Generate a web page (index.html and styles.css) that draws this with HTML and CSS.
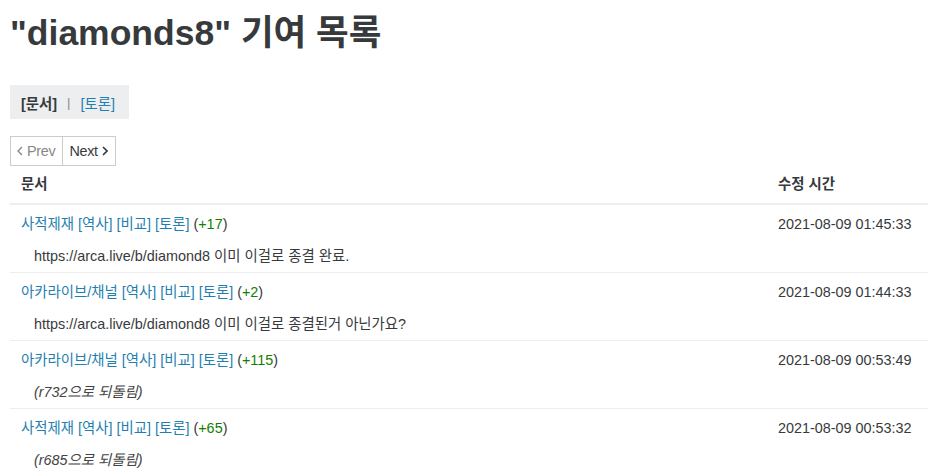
FILE: index.html
```html
<!DOCTYPE html>
<html lang="ko">
<head>
<meta charset="utf-8">
<title>기여 목록</title>
<link rel="stylesheet" href="styles.css">
</head>
<body>
<div class="page">
  <h1 class="title">"diamonds8" 기여 목록</h1>
  <div class="tabs"><strong>[문서]</strong><span class="sep">|</span><a href="#">[토론]</a></div>
  <div class="pager">
    <span class="btn disabled"><svg class="chev" viewBox="0 0 6 10" width="6" height="10"><path d="M5 1 1 5l4 4" fill="none" stroke="currentColor" stroke-width="1.4"/></svg>Prev</span>
    <a class="btn" href="#">Next<svg class="chev" viewBox="0 0 6 10" width="6" height="10"><path d="M1 1l4 4-4 4" fill="none" stroke="currentColor" stroke-width="1.6"/></svg></a>
  </div>
  <table class="list">
    <thead>
      <tr><th class="doc">문서</th><th class="time">수정 시간</th></tr>
    </thead>
    <tbody>
      <tr>
        <td><div class="line"><a href="#">사적제재</a> <a href="#">[역사]</a> <a href="#">[비교]</a> <a href="#">[토론]</a> (<span class="plus">+17</span>)</div>
          <div class="comment">https://arca.live/b/diamond8 이미 이걸로 종결 완료.</div></td>
        <td class="time"><div class="line">2021-08-09 01:45:33</div></td>
      </tr>
      <tr>
        <td><div class="line"><a href="#">아카라이브/채널</a> <a href="#">[역사]</a> <a href="#">[비교]</a> <a href="#">[토론]</a> (<span class="plus">+2</span>)</div>
          <div class="comment">https://arca.live/b/diamond8 이미 이걸로 종결된거 아닌가요?</div></td>
        <td class="time"><div class="line">2021-08-09 01:44:33</div></td>
      </tr>
      <tr>
        <td><div class="line"><a href="#">아카라이브/채널</a> <a href="#">[역사]</a> <a href="#">[비교]</a> <a href="#">[토론]</a> (<span class="plus">+115</span>)</div>
          <div class="comment"><i>(r732으로 되돌림)</i></div></td>
        <td class="time"><div class="line">2021-08-09 00:53:49</div></td>
      </tr>
      <tr>
        <td><div class="line"><a href="#">사적제재</a> <a href="#">[역사]</a> <a href="#">[비교]</a> <a href="#">[토론]</a> (<span class="plus">+65</span>)</div>
          <div class="comment"><i>(r685으로 되돌림)</i></div></td>
        <td class="time"><div class="line">2021-08-09 00:53:32</div></td>
      </tr>
    </tbody>
  </table>
</div>
</body>
</html>
```
FILE: styles.css
```css
html, body {
  margin: 0;
  padding: 0;
  background: #fff;
}
body {
  font-family: "Liberation Sans", "Noto Sans CJK KR", sans-serif;
  font-size: 14.4px;
  color: #373a3c;
}
a {
  color: #1f7fb0;
  text-decoration: none;
}
.page {
  padding: 0 0 0 10px;
}
.title {
  font-size: 35.5px;
  font-weight: bold;
  line-height: 40px;
  margin: 13px 0 0;
  color: #373a3c;
}
.tabs {
  display: inline-flex;
  align-items: center;
  height: 34px;
  margin-top: 32px;
  padding: 0 14px 0 11px;
  background: #eceeef;
  box-sizing: border-box;
}
.tabs strong {
  font-weight: bold;
}
.tabs .sep {
  color: #888;
  margin: 0 10px 0 10px;
  font-size: 13px;
}
.pager {
  display: flex;
  margin-top: 17px;
}
.btn {
  display: inline-flex;
  align-items: center;
  gap: 4px;
  height: 30px;
  box-sizing: border-box;
  border: 1px solid #ccc;
  padding: 0 7px 0 6px;
  color: #373a3c;
  background: #fff;
  letter-spacing: -0.3px;
}
.btn + .btn {
  border-left: none;
}
.btn.disabled {
  color: #888;
}
.chev {
  display: block;
}
.list {
  border-collapse: collapse;
  width: 100%;
}
.list th {
  text-align: left;
  font-weight: bold;
  padding: 10px 11px 10px;
  line-height: 17px;
  border-bottom: 2px solid #eceeef;
}
.list th.time {
  width: 139px;
}
.list td {
  vertical-align: top;
  padding: 8px 11px 5px;
  border-bottom: 1px solid #eceeef;
}
.line {
  line-height: 22px;
}
.comment {
  line-height: 22px;
  margin-top: 10px;
  padding-left: 13px;
  color: #373a3c;
}
.comment i {
  color: #444;
}
.plus {
  color: #118000;
}
```
